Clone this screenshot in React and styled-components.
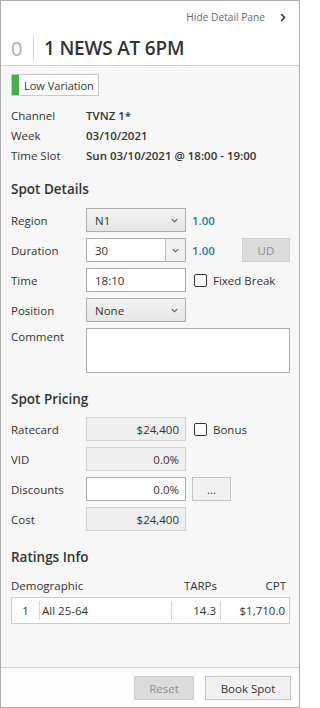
import React from 'react';
import styled, { createGlobalStyle } from 'styled-components';

const GlobalStyle = createGlobalStyle`
  html, body {
    margin: 0;
    padding: 0;
    background: #fff;
    overflow: hidden;
  }
  body {
    font-family: "Open Sans", "Noto Sans", sans-serif;
    color: #333;
  }
`;

const Pane = styled.div`
  width: 300px;
  height: 708px;
  box-sizing: border-box;
  border: 1px solid #adadad;
  display: flex;
  flex-direction: column;
  font-size: 11.5px;
  overflow: hidden;
`;

// 상단 헤더
const Header = styled.div`
  height: 64px;
  background: #fff;
  border-bottom: 1px solid #cfcfcf;
  display: flex;
  flex-direction: column;
`;

const HideRow = styled.div`
  display: flex;
  justify-content: flex-end;
  align-items: center;
  gap: 15px;
  padding: 8px 13px 0 0;
  height: 16px;
  font-size: 10.2px;
  color: #6a6a6a;
`;

const TitleRow = styled.div`
  display: flex;
  align-items: center;
  margin-top: 10px;
  padding-left: 10px;
  height: 26px;
`;

const Count = styled.span`
  font-size: 20px;
  color: #b0b0b0;
  width: 22px;
`;

const Divider = styled.span`
  width: 1px;
  height: 25px;
  background: #dadada;
  margin-right: 10px;
`;

const Title = styled.span`
  font-size: 19px;
  font-weight: 600;
  color: #333;
  letter-spacing: -0.2px;
`;

const Body = styled.div`
  flex: 1;
  background: #f7f7f7;
  padding: 8px 9px 0 10px;
  display: flex;
  flex-direction: column;
  min-width: 0;
`;

const Badge = styled.div`
  display: flex;
  align-items: center;
  width: 88px;
  height: 22px;
  box-sizing: border-box;
  border: 1px solid #c9c9c9;
  background: #fff;
  font-size: 11px;
  white-space: nowrap;
`;

const BadgeBar = styled.span`
  width: 7px;
  align-self: stretch;
  background: #46b04c;
  margin-right: 5px;
`;

const InfoGrid = styled.div`
  display: grid;
  grid-template-columns: 75px 1fr;
  grid-auto-rows: 20px;
  align-items: center;
  margin-top: 9px;
`;

const InfoValue = styled.span`
  font-weight: 600;
`;

const SectionTitle = styled.div`
  font-size: 13.5px;
  font-weight: 600;
  height: 20px;
  line-height: 20px;
  margin-top: ${p => p.$top}px;
`;

const FormRows = styled.div`
  display: flex;
  flex-direction: column;
  gap: 6px;
  margin-top: ${p => p.$top}px;
`;

const Row = styled.div`
  display: flex;
  align-items: ${p => (p.$top ? 'flex-start' : 'center')};
  height: ${p => p.$h || 24}px;
`;

const Label = styled.span`
  width: 75px;
  flex-shrink: 0;
  padding-top: ${p => (p.$top ? 1 : 0)}px;
`;

const Select = styled.div`
  width: 100px;
  height: 24px;
  box-sizing: border-box;
  border: 1px solid #acacac;
  background: linear-gradient(#f3f3f3, #e6e6e6);
  display: flex;
  align-items: center;
  justify-content: space-between;
  padding: 0 6px 0 8px;
`;

const Combo = styled.div`
  width: 100px;
  height: 24px;
  box-sizing: border-box;
  border: 1px solid #acacac;
  background: #fff;
  display: flex;
`;

const ComboText = styled.span`
  flex: 1;
  display: flex;
  align-items: center;
  padding-left: 8px;
`;

const ComboButton = styled.span`
  width: 19px;
  border-left: 1px solid #c3c3c3;
  background: #f0f0f0;
  display: flex;
  align-items: center;
  justify-content: center;
`;

const Input = styled.div`
  width: ${p => p.$w || 100}px;
  height: ${p => p.$h || 24}px;
  flex-shrink: 0;
  box-sizing: border-box;
  border: 1px solid ${p => (p.$readOnly ? '#d4d4d4' : '#acacac')};
  background: ${p => (p.$readOnly ? '#efefef' : '#fff')};
  display: flex;
  align-items: center;
  justify-content: ${p => (p.$right ? 'flex-end' : 'flex-start')};
  padding: 0 6px 0 8px;
`;

const Factor = styled.span`
  color: #1f7bbf;
  font-weight: 600;
  margin-left: 6px;
`;

const Button = styled.div`
  width: ${p => p.$w}px;
  height: 24px;
  flex-shrink: 0;
  box-sizing: border-box;
  border: 1px solid ${p => (p.$disabled ? '#d0d0d0' : '#c4c4c4')};
  background: ${p => (p.$disabled ? '#dcdcdc' : '#f1f1f1')};
  color: ${p => (p.$disabled ? '#8f8f8f' : '#333')};
  display: flex;
  align-items: center;
  justify-content: center;
  margin-left: ${p => p.$ml || 0}px;
  font-size: 11.5px;
`;

const Check = styled.label`
  display: flex;
  align-items: center;
  gap: 6px;
  margin-left: 8px;
  white-space: nowrap;
`;

const Box = styled.span`
  width: 11px;
  height: 11px;
  border: 1px solid #333;
  border-radius: 2px;
  background: #fff;
`;

const TableHead = styled.div`
  display: grid;
  grid-template-columns: 27px 132px 48px 1fr;
  margin-top: 9px;
  height: 18px;
  align-items: center;
`;

const TableRow = styled.div`
  display: grid;
  grid-template-columns: 27px 132px 49px 1fr;
  margin-top: 3px;
  height: 27px;
  box-sizing: border-box;
  border: 1px solid #cdcdcd;
  background: #fff;
  align-items: center;
`;

const Cell = styled.span`
  text-align: ${p => p.$align || 'left'};
  padding: ${p => p.$pad || '0'};
  border-left: ${p => (p.$line ? '1px solid #d6d6d6' : 'none')};
  height: 19px;
  line-height: 19px;
  grid-column: ${p => p.$span || 'auto'};
`;

const Footer = styled.div`
  height: 40px;
  flex-shrink: 0;
  border-top: 1px solid #d2d2d2;
  background: #fcfcfc;
  display: flex;
  justify-content: flex-end;
  align-items: flex-start;
  padding: 8px 8px 0 0;
  box-sizing: border-box;
`;

const Chevron = ({ size = 9, color = '#555' }) => (
  <svg width={size} height={size} viewBox="0 0 10 10">
    <path d="M2 3.5 L5 6.5 L8 3.5" fill="none" stroke={color} strokeWidth="1.2" />
  </svg>
);

const SelectField = ({ value }) => (
  <Select>
    <span>{value}</span>
    <Chevron />
  </Select>
);

export default function App() {
  return (
    <>
      <GlobalStyle />
      <Pane>
        <Header>
          <HideRow>
            <span>Hide Detail Pane</span>
            <svg width="6" height="9" viewBox="0 0 6 9">
              <path d="M1.2 1 L4.5 4.5 L1.2 8" fill="none" stroke="#333" strokeWidth="1.6" />
            </svg>
          </HideRow>
          <TitleRow>
            <Count>0</Count>
            <Divider />
            <Title>1 NEWS AT 6PM</Title>
          </TitleRow>
        </Header>

        <Body>
          <Badge>
            <BadgeBar />
            Low Variation
          </Badge>

          <InfoGrid>
            <span>Channel</span>
            <InfoValue>TVNZ 1*</InfoValue>
            <span>Week</span>
            <InfoValue>03/10/2021</InfoValue>
            <span>Time Slot</span>
            <InfoValue>Sun 03/10/2021 @ 18:00 - 19:00</InfoValue>
          </InfoGrid>

          <SectionTitle $top={14}>Spot Details</SectionTitle>
          <FormRows $top={9}>
            <Row>
              <Label>Region</Label>
              <SelectField value="N1" />
              <Factor>1.00</Factor>
            </Row>
            <Row>
              <Label>Duration</Label>
              <Combo>
                <ComboText>30</ComboText>
                <ComboButton><Chevron /></ComboButton>
              </Combo>
              <Factor>1.00</Factor>
              <Button $w={48} $disabled $ml={27}>UD</Button>
            </Row>
            <Row>
              <Label>Time</Label>
              <Input>18:10</Input>
              <Check><Box />Fixed Break</Check>
            </Row>
            <Row>
              <Label>Position</Label>
              <SelectField value="None" />
            </Row>
            <Row $top $h={45}>
              <Label $top>Comment</Label>
              <Input $w={204} $h={45} />
            </Row>
          </FormRows>

          <SectionTitle $top={16}>Spot Pricing</SectionTitle>
          <FormRows $top={8}>
            <Row>
              <Label>Ratecard</Label>
              <Input $readOnly $right>$24,400</Input>
              <Check><Box />Bonus</Check>
            </Row>
            <Row>
              <Label>VID</Label>
              <Input $readOnly $right>0.0%</Input>
            </Row>
            <Row>
              <Label>Discounts</Label>
              <Input $right>0.0%</Input>
              <Button $w={39} $ml={6}>...</Button>
            </Row>
            <Row>
              <Label>Cost</Label>
              <Input $readOnly $right>$24,400</Input>
            </Row>
          </FormRows>

          <SectionTitle $top={16}>Ratings Info</SectionTitle>
          <TableHead>
            <Cell $span="1 / 3">Demographic</Cell>
            <Cell $align="right" $pad="0 1px 0 0">TARPs</Cell>
            <Cell $align="right" $pad="0 4px 0 0">CPT</Cell>
          </TableHead>
          <TableRow>
            <Cell $align="center">1</Cell>
            <Cell $line $pad="0 0 0 2px">All 25-64</Cell>
            <Cell $line $align="right" $pad="0 4px 0 0">14.3</Cell>
            <Cell $line $align="right" $pad="0 4px 0 0">$1,710.0</Cell>
          </TableRow>
        </Body>

        <Footer>
          <Button $w={60} $disabled>Reset</Button>
          <Button $w={86} $ml={11}>Book Spot</Button>
        </Footer>
      </Pane>
    </>
  );
}
